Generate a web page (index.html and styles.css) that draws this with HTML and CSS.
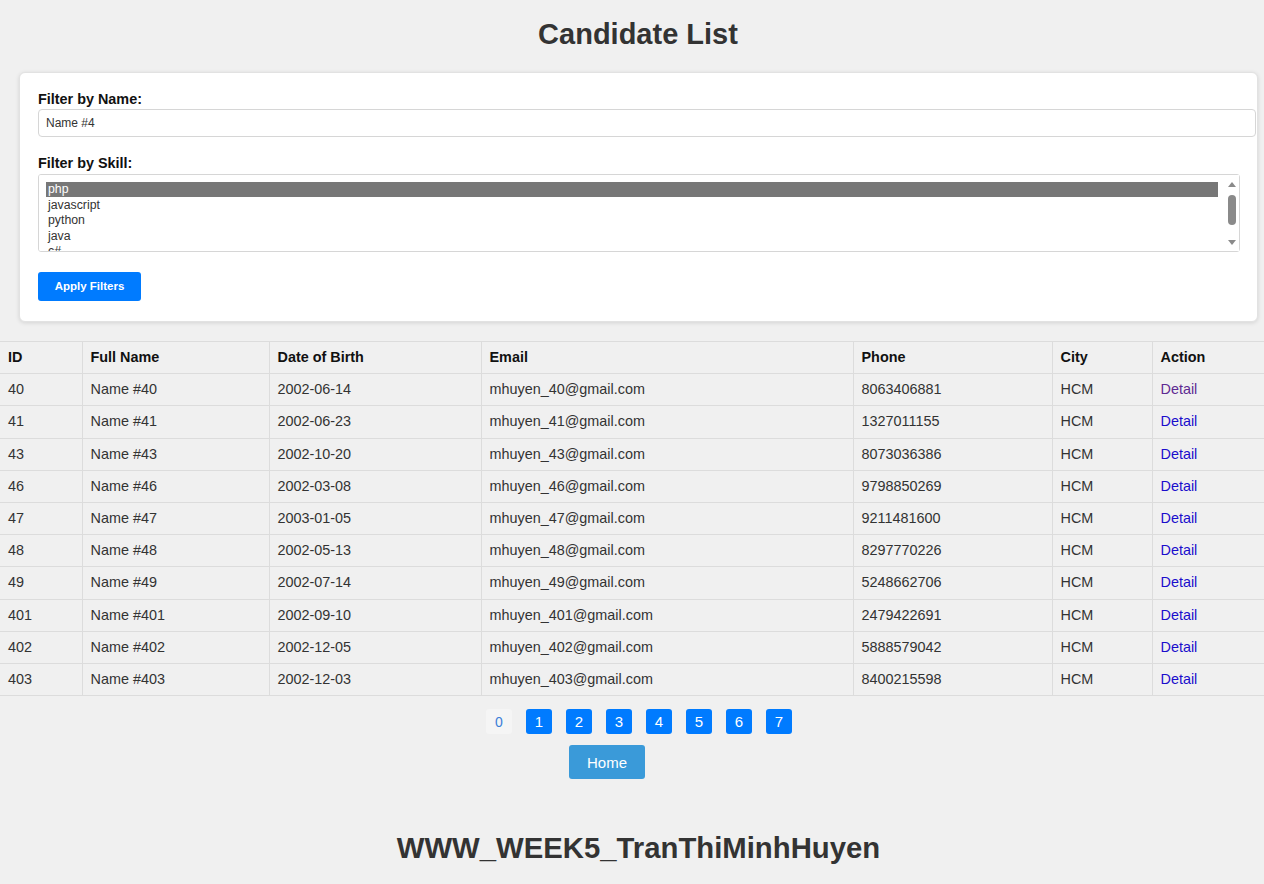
FILE: index.html
```html
<!DOCTYPE html>
<html lang="en">
<head>
<meta charset="utf-8">
<title>Candidate List</title>
<link rel="stylesheet" href="styles.css">
</head>
<body>
<div class="page">
  <h1 class="title">Candidate List</h1>
  <form class="card">
    <label class="label" for="name">Filter by Name:</label>
    <input class="input" id="name" type="text" value="Name #4">
    <label class="label label-skill" for="skill">Filter by Skill:</label>
    <div class="select-wrap">
      <select class="select" id="skill" multiple>
        <option selected>php</option>
        <option>javascript</option>
        <option>python</option>
        <option>java</option>
        <option>c#</option>
        <option>ruby</option>
        <option>go</option>
      </select>
      <div class="fake-scroll" aria-hidden="true">
        <span class="arrow arrow-up"></span>
        <span class="thumb"></span>
        <span class="arrow arrow-down"></span>
      </div>
    </div>
    <button class="btn-apply" type="button">Apply Filters</button>
  </form>
</div>
<table class="table">
  <colgroup>
    <col style="width:82px"><col style="width:187px"><col style="width:212px"><col style="width:372px"><col style="width:199px"><col style="width:100px"><col>
  </colgroup>
  <thead>
    <tr><th>ID</th><th>Full Name</th><th>Date of Birth</th><th>Email</th><th>Phone</th><th>City</th><th>Action</th></tr>
  </thead>
  <tbody>
    <tr><td>40</td><td>Name #40</td><td>2002-06-14</td><td>mhuyen_40@gmail.com</td><td>8063406881</td><td>HCM</td><td><a class="link visited" href="#">Detail</a></td></tr>
    <tr><td>41</td><td>Name #41</td><td>2002-06-23</td><td>mhuyen_41@gmail.com</td><td>1327011155</td><td>HCM</td><td><a class="link" href="#">Detail</a></td></tr>
    <tr><td>43</td><td>Name #43</td><td>2002-10-20</td><td>mhuyen_43@gmail.com</td><td>8073036386</td><td>HCM</td><td><a class="link" href="#">Detail</a></td></tr>
    <tr><td>46</td><td>Name #46</td><td>2002-03-08</td><td>mhuyen_46@gmail.com</td><td>9798850269</td><td>HCM</td><td><a class="link" href="#">Detail</a></td></tr>
    <tr><td>47</td><td>Name #47</td><td>2003-01-05</td><td>mhuyen_47@gmail.com</td><td>9211481600</td><td>HCM</td><td><a class="link" href="#">Detail</a></td></tr>
    <tr><td>48</td><td>Name #48</td><td>2002-05-13</td><td>mhuyen_48@gmail.com</td><td>8297770226</td><td>HCM</td><td><a class="link" href="#">Detail</a></td></tr>
    <tr><td>49</td><td>Name #49</td><td>2002-07-14</td><td>mhuyen_49@gmail.com</td><td>5248662706</td><td>HCM</td><td><a class="link" href="#">Detail</a></td></tr>
    <tr><td>401</td><td>Name #401</td><td>2002-09-10</td><td>mhuyen_401@gmail.com</td><td>2479422691</td><td>HCM</td><td><a class="link" href="#">Detail</a></td></tr>
    <tr><td>402</td><td>Name #402</td><td>2002-12-05</td><td>mhuyen_402@gmail.com</td><td>5888579042</td><td>HCM</td><td><a class="link" href="#">Detail</a></td></tr>
    <tr><td>403</td><td>Name #403</td><td>2002-12-03</td><td>mhuyen_403@gmail.com</td><td>8400215598</td><td>HCM</td><td><a class="link" href="#">Detail</a></td></tr>
  </tbody>
</table>
<nav class="pagination">
  <a class="page-btn current" href="#">0</a>
  <a class="page-btn" href="#">1</a>
  <a class="page-btn" href="#">2</a>
  <a class="page-btn" href="#">3</a>
  <a class="page-btn" href="#">4</a>
  <a class="page-btn" href="#">5</a>
  <a class="page-btn" href="#">6</a>
  <a class="page-btn" href="#">7</a>
</nav>
<div class="home-row">
  <a class="btn-home" href="#">Home</a>
</div>
<footer class="footer">WWW_WEEK5_TranThiMinhHuyen</footer>
</body>
</html>
```
FILE: styles.css
```css
* { box-sizing: border-box; }
html, body {
  margin: 0;
  padding: 0;
  background: #f0f0f0;
  font-family: "Liberation Sans", Arial, sans-serif;
  color: #333;
}
.page {
  padding-left: 12px;
}
.title {
  margin: 0;
  padding-top: 18px;
  height: 72px;
  font-size: 29px;
  line-height: 33px;
  font-weight: bold;
  text-align: center;
  color: #333;
}
.card {
  display: flex;
  flex-direction: column;
  align-items: flex-start;
  margin: 0 6px 0 7px;
  height: 250px;
  padding: 18px 17px 20px 18px;
  background: #fff;
  border: 1px solid #e2e2e2;
  border-radius: 6px;
  box-shadow: 0 1px 4px rgba(0,0,0,0.12);
}
.label {
  font-size: 14.4px;
  line-height: 17px;
  font-weight: bold;
  color: #111;
  margin-bottom: 1px;
}
.label-skill { margin-top: 18px; margin-bottom: 2px; }
.input {
  width: calc(100% + 16px);
  height: 29px;
  padding: 0 7px;
  border: 1px solid #d6d6d6;
  border-radius: 4px;
  font-family: "Liberation Sans", Arial, sans-serif;
  font-size: 12px;
  color: #333;
  background: #fff;
}
.select-wrap {
  position: relative;
  width: 100%;
  height: 78px;
}
.select {
  display: block;
  width: 100%;
  height: 78px;
  padding: 7px 21px 0 7px;
  border: 1px solid #d6d6d6;
  border-radius: 3px;
  font-family: "Liberation Sans", Arial, sans-serif;
  font-size: 12.3px;
  color: #333;
  background: #fff;
  outline: none;
  scrollbar-width: none;
}
.select option {
  padding: 0.5px 2px 1px;
  line-height: 14px;
}
.select option:checked {
  background: #777 linear-gradient(#777, #777);
  color: #fff;
}
.fake-scroll {
  position: absolute;
  top: 1px;
  right: 1px;
  bottom: 1px;
  width: 15px;
  display: flex;
  flex-direction: column;
  align-items: center;
  padding: 7px 0 6px;
  background: #fff;
}
.arrow {
  flex: none;
  width: 0;
  height: 0;
  border-left: 4px solid transparent;
  border-right: 4px solid transparent;
}
.arrow-up { border-bottom: 5px solid #8a8a8a; }
.arrow-down { border-top: 5px solid #8a8a8a; margin-top: auto; }
.thumb {
  flex: none;
  width: 8px;
  height: 30px;
  margin-top: 8px;
  border-radius: 4px;
  background: #8a8a8a;
}
.btn-apply {
  margin-top: 20px;
  width: 103px;
  height: 31px;
  border: none;
  border-radius: 3px;
  background: #007bff;
  color: #fff;
  font-family: "Liberation Sans", Arial, sans-serif;
  font-size: 11.5px;
  font-weight: bold;
  cursor: pointer;
}
.table {
  margin-top: 19px;
  width: 100%;
  border-collapse: collapse;
  table-layout: fixed;
  font-size: 14.4px;
  color: #333;
}
.table th, .table td {
  border: 1px solid #dcdcdc;
  padding: 0 8px 1px;
  height: 32.2px;
  text-align: left;
  white-space: nowrap;
}
.table tr > :first-child { border-left: none; }
.table tr > :last-child { border-right: none; }
.table th {
  font-weight: bold;
  color: #111;
  padding-bottom: 2px;
}
.link {
  color: #1a0dcc;
  text-decoration: none;
}
.link.visited { color: #5e2a92; }
.pagination {
  display: flex;
  justify-content: center;
  gap: 14px;
  margin-top: 13px;
  padding-left: 14px;
}
.page-btn {
  display: flex;
  align-items: center;
  justify-content: center;
  width: 26px;
  height: 25px;
  border-radius: 3px;
  background: #007bff;
  color: #fff;
  font-size: 15px;
  text-decoration: none;
}
.page-btn.current {
  background: #f5f5f5;
  color: #3c7fd8;
  font-size: 14px;
}
.home-row {
  display: flex;
  justify-content: center;
  padding-right: 50px;
  margin-top: 11px;
}
.btn-home {
  display: flex;
  align-items: center;
  justify-content: center;
  width: 76px;
  height: 34px;
  border-radius: 3px;
  background: #3a9ad9;
  color: #fff;
  font-size: 15px;
  text-decoration: none;
}
.footer {
  margin-top: 52px;
  padding-left: 13px;
  text-align: center;
  font-size: 29.3px;
  line-height: 33px;
  font-weight: bold;
  color: #333;
}
```
